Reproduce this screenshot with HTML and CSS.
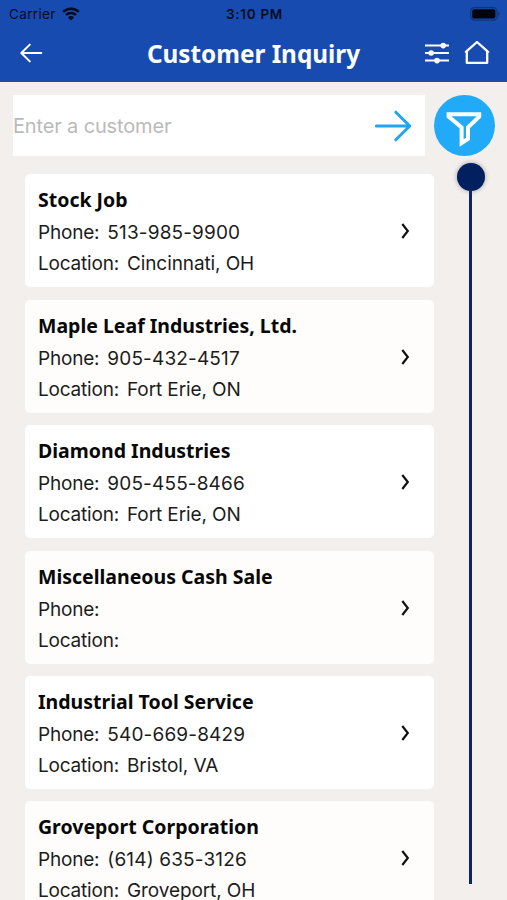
FILE: index.html
```html
<!DOCTYPE html>
<html lang="en">

<head>
    <meta charset="UTF-8">
    <meta name="viewport" content="width=device-width, initial-scale=1.0">

    <title>Customer Inquiry</title>
    <link rel="stylesheet" href="styles.css">
</head>

<body>
    <header>
        <div class="status">
            <div class="carrier">
                <span>Carrier</span>
                <svg class="wifi" width="18" height="14" viewBox="0 0 18 14">
                    <path d="M1.2 4.9a11.2 11.2 0 0 1 15.6 0M4 8a7.2 7.2 0 0 1 10 0" fill="none" stroke="#030b1c" stroke-width="2.4" />
                    <path d="M9 13.6L5.9 10.4a4.4 4.4 0 0 1 6.2 0z" fill="#030b1c" />
                </svg>
            </div>
            <span class="time">3:10 PM</span>
            <svg class="battery" width="30" height="14" viewBox="0 0 30 14">
                <rect x="0.7" y="0.7" width="26.4" height="12.4" rx="3.6" fill="none" stroke="#0f3479" stroke-width="1.2" />
                <rect x="2.2" y="2.2" width="23.2" height="9.4" rx="2.2" fill="#00040d" />
                <path d="M28.4 5v4q1.3-.6 1.3-2t-1.3-2z" fill="#0f3479" />
            </svg>
        </div>
        <nav>
            <svg class="back" width="24" height="22" viewBox="0 0 24 22">
                <path d="M21.3 11H1.5M9.8 2.6L1.3 11l8.5 8.4" fill="none" stroke="#fff" stroke-width="2" stroke-linecap="round" stroke-linejoin="round" />
            </svg>
            <h1>Customer Inquiry</h1>
            <div class="tools">
                <svg width="26" height="24" viewBox="0 0 26 24">
                    <path d="M1 4.6h24M1 12h24M1 19.6h24" fill="none" stroke="#fff" stroke-width="2" />
                    <circle cx="19.2" cy="4.6" r="2.8" fill="#fff" />
                    <circle cx="7.2" cy="12" r="2.8" fill="#fff" />
                    <circle cx="13" cy="19.6" r="2.8" fill="#fff" />
                </svg>
                <svg width="26" height="24" viewBox="0 0 26 24">
                    <path d="M1.9 10.8L13 1l11.1 9.8M2.8 10v11.8h20.4V10" fill="none" stroke="#fff" stroke-width="2.3" stroke-linecap="round" stroke-linejoin="round" />
                </svg>
            </div>
        </nav>
    </header>

    <main>
        <div class="content">
            <div class="search">
                <input type="text" placeholder="Enter a customer">
                <svg width="38" height="32" viewBox="0 0 38 32">
                    <path d="M2.4 16h33M21.8 2.2L35.8 16 21.8 29.8" fill="none" stroke="#20a5f3" stroke-width="3" stroke-linecap="round" stroke-linejoin="round" />
                </svg>
            </div>

            <div class="list">
                <div class="card">
                    <div class="info">
                        <h2>Stock Job</h2>
                        <p><span class="label">Phone:</span><span class="phone">513-985-9900</span></p>
                        <p><span class="label">Location:</span><span class="place">Cincinnati, OH</span></p>
                    </div>
                    <svg class="chevron" width="10" height="18" viewBox="0 0 10 18"><path d="M1.3 2L6.8 9l-5.5 7" /></svg>
                </div>
                <div class="card alt">
                    <div class="info">
                        <h2>Maple Leaf Industries, Ltd.</h2>
                        <p><span class="label">Phone:</span><span class="phone">905-432-4517</span></p>
                        <p><span class="label">Location:</span><span class="place">Fort Erie, ON</span></p>
                    </div>
                    <svg class="chevron" width="10" height="18" viewBox="0 0 10 18"><path d="M1.3 2L6.8 9l-5.5 7" /></svg>
                </div>
                <div class="card">
                    <div class="info">
                        <h2>Diamond Industries</h2>
                        <p><span class="label">Phone:</span><span class="phone">905-455-8466</span></p>
                        <p><span class="label">Location:</span><span class="place">Fort Erie, ON</span></p>
                    </div>
                    <svg class="chevron" width="10" height="18" viewBox="0 0 10 18"><path d="M1.3 2L6.8 9l-5.5 7" /></svg>
                </div>
                <div class="card alt">
                    <div class="info">
                        <h2>Miscellaneous Cash Sale</h2>
                        <p><span class="label">Phone:</span></p>
                        <p><span class="label">Location:</span></p>
                    </div>
                    <svg class="chevron" width="10" height="18" viewBox="0 0 10 18"><path d="M1.3 2L6.8 9l-5.5 7" /></svg>
                </div>
                <div class="card">
                    <div class="info">
                        <h2>Industrial Tool Service</h2>
                        <p><span class="label">Phone:</span><span class="phone">540-669-8429</span></p>
                        <p><span class="label">Location:</span><span class="place">Bristol, VA</span></p>
                    </div>
                    <svg class="chevron" width="10" height="18" viewBox="0 0 10 18"><path d="M1.3 2L6.8 9l-5.5 7" /></svg>
                </div>
                <div class="card alt">
                    <div class="info">
                        <h2>Groveport Corporation</h2>
                        <p><span class="label">Phone:</span><span class="phone">(614) 635-3126</span></p>
                        <p><span class="label">Location:</span><span class="place">Groveport, OH</span></p>
                    </div>
                    <svg class="chevron" width="10" height="18" viewBox="0 0 10 18"><path d="M1.3 2L6.8 9l-5.5 7" /></svg>
                </div>
            </div>
        </div>

        <aside>
            <button class="filter">
                <svg width="36" height="44" viewBox="0 0 36 44">
                    <path d="M2.6 10.2h30.6v2.4L22 23.4v11.4l-6.4 4.2V23.4L2.6 12.6z" fill="none" stroke="#fff" stroke-width="4" />
                </svg>
            </button>
            <div class="slider">
                <div class="knob"></div>
                <div class="track"></div>
            </div>
        </aside>
    </main>
</body>

</html>
```

FILE: styles.css
```css
* {
    margin: 0;
    padding: 0;
    box-sizing: border-box;
}

body {
    height: 100vh;
    overflow: hidden;
    background-color: #f2efed;
    font-family: Inter, "Liberation Sans", sans-serif;
    color: #1c1c1c;
}

svg {
    display: block;
    flex-shrink: 0;
}

header {
    height: 82px;
    background-color: #184bb0;
}

.status {
    display: grid;
    grid-template-columns: 1fr auto 1fr;
    align-items: center;
    height: 28px;
    padding: 0 7px 0 9px;
    font-size: 13.5px;
    color: #030b1c;
}

.carrier {
    display: flex;
    align-items: center;
    gap: 6px;
    letter-spacing: 0.35px;
}

.time {
    font-weight: 600;
    letter-spacing: 0.7px;
}

.battery {
    justify-self: end;
}

nav {
    display: grid;
    grid-template-columns: 1fr auto 1fr;
    align-items: center;
    height: 50px;
    padding: 0 17px 0 20px;
}

h1 {
    font-family: "Noto Sans", sans-serif;
    font-size: 24.3px;
    line-height: 34px;
    font-weight: 700;
    color: white;
    margin: 2px 3px 0 0;
}

.tools {
    display: flex;
    justify-content: flex-end;
    gap: 14px;
}

main {
    display: flex;
    gap: 8px;
    padding: 13px 12px 0 13px;
}

.content {
    width: 412px;
}

.search {
    display: flex;
    align-items: center;
    height: 61px;
    padding-right: 13px;
    background-color: white;
}

.search input {
    flex: 1;
    min-width: 0;
    height: 100%;
    border: none;
    outline: none;
    background: none;
    font-family: inherit;
    font-size: 20px;
    letter-spacing: -0.15px;
}

.search input::placeholder {
    color: #bababa;
}

.list {
    display: flex;
    flex-direction: column;
    gap: 12.4px;
    width: 409px;
    margin: 18.4px 0 0 12px;
}

.card {
    display: flex;
    justify-content: space-between;
    height: 113px;
    padding: 10px 23px 0 13px;
    border-radius: 5px;
    background-color: white;
}

.alt {
    background-color: #fefdfb;
}

.card h2 {
    font-family: "Noto Sans", sans-serif;
    font-size: 19.5px;
    line-height: 32px;
    font-weight: 700;
    color: #080808;
    margin-bottom: 1px;
}

.card p {
    display: flex;
    gap: 8px;
    font-size: 19px;
    line-height: 31.1px;
}

.label {
    letter-spacing: -0.2px;
}

.phone {
    letter-spacing: 0.15px;
}

.place {
    letter-spacing: -0.1px;
}

.chevron {
    margin-top: 38px;
}

.chevron path {
    fill: none;
    stroke: #111;
    stroke-width: 2.2;
}

aside {
    display: flex;
    flex-direction: column;
    align-items: center;
    width: 62px;
}

.filter {
    display: flex;
    justify-content: center;
    align-items: center;
    width: 61px;
    height: 61px;
    border: none;
    border-radius: 50%;
    background-color: #20aaf8;
}

.slider {
    display: flex;
    flex-direction: column;
    align-items: center;
    margin: 7px 0 0 14px;
}

.knob {
    width: 28px;
    height: 28px;
    border-radius: 50%;
    background-color: #02205f;
    box-shadow: 0 0 5px rgba(0, 0, 0, 0.35);
}

.track {
    width: 3px;
    height: 693px;
    margin-right: 2px;
    background-color: #0b2566;
}
```
